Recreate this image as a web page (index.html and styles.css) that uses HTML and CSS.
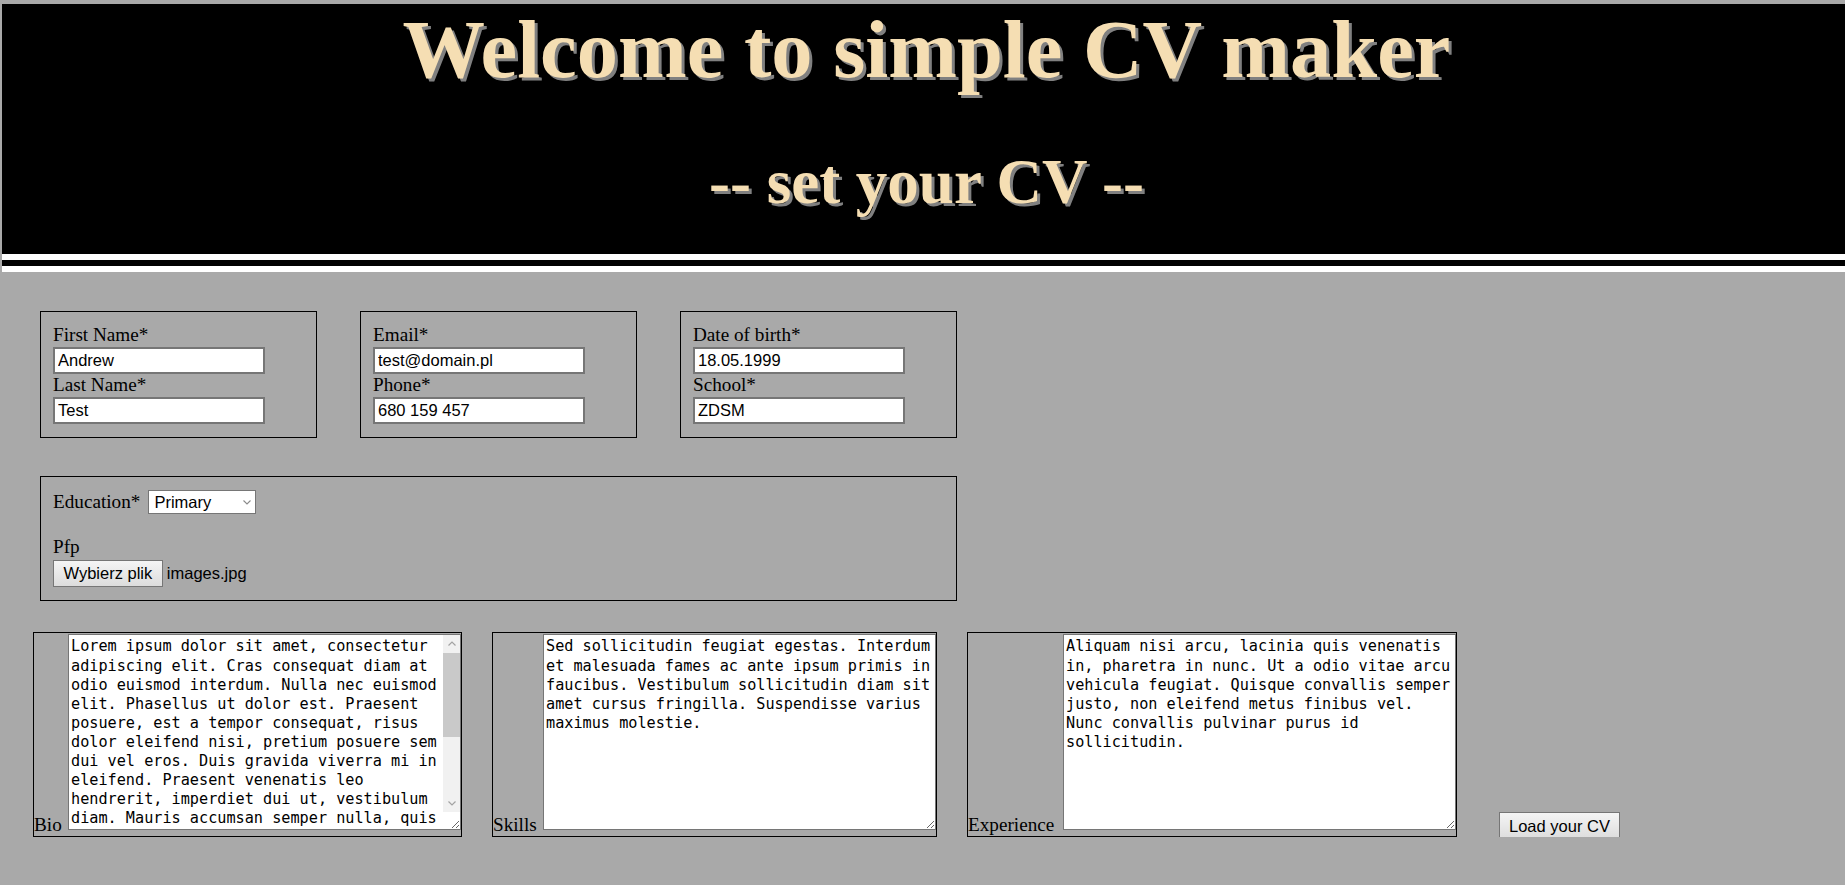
FILE: index.html
```html
<!DOCTYPE html>
<html lang="pl">
<head>
<meta charset="utf-8">
<title>Simple CV maker</title>
<link rel="stylesheet" href="styles.css">
</head>
<body>
<header class="banner">
  <h1 class="banner-title">Welcome to simple CV maker</h1>
  <h2 class="banner-sub">-- set your CV --</h2>
</header>
<form class="cv-form">
  <div class="row-info">
    <div class="box">
      <label class="lbl" for="fname">First Name*</label>
      <input class="field" id="fname" type="text" value="Andrew">
      <label class="lbl" for="lname">Last Name*</label>
      <input class="field" id="lname" type="text" value="Test">
    </div>
    <div class="box">
      <label class="lbl" for="email">Email*</label>
      <input class="field" id="email" type="text" value="test@domain.pl">
      <label class="lbl" for="phone">Phone*</label>
      <input class="field" id="phone" type="text" value="680 159 457">
    </div>
    <div class="box">
      <label class="lbl" for="dob">Date of birth*</label>
      <input class="field" id="dob" type="text" value="18.05.1999">
      <label class="lbl" for="school">School*</label>
      <input class="field" id="school" type="text" value="ZDSM">
    </div>
  </div>
  <div class="box box-wide">
    <div class="edu-row">
      <label class="lbl" for="edu">Education*</label>
      <span class="select-wrap">
        <select class="select" id="edu">
          <option>Primary</option>
          <option>Secondary</option>
          <option>Higher</option>
        </select>
        <svg class="chev" width="8" height="5" viewBox="0 0 8 5"><polyline points="0.5,0.5 4,4 7.5,0.5" fill="none" stroke="#8a8a8a" stroke-width="1.1"/></svg>
      </span>
    </div>
    <label class="lbl lbl-pfp">Pfp</label>
    <div class="file-row">
      <span class="file-btn">Wybierz plik</span>
      <span class="file-name">images.jpg</span>
    </div>
  </div>
  <div class="row-text">
    <div class="tbox tbox-bio">
      <label class="lbl tlbl" for="bio">Bio</label>
      <div class="bio-wrap">
        <textarea class="area area-bio" id="bio">Lorem ipsum dolor sit amet, consectetur adipiscing elit. Cras consequat diam at odio euismod interdum. Nulla nec euismod elit. Phasellus ut dolor est. Praesent posuere, est a tempor consequat, risus dolor eleifend nisi, pretium posuere sem dui vel eros. Duis gravida viverra mi in eleifend. Praesent venenatis leo hendrerit, imperdiet dui ut, vestibulum diam. Mauris accumsan semper nulla, quis tincidunt lectus mollis a. Nam vel nisi non nunc facilisis tempus. Suspendisse potenti. Vivamus eget sapien vel leo rhoncus porta. Morbi at feugiat lorem, sed luctus augue. Etiam non ex vitae justo hendrerit pulvinar. Integer vel ultricies lacus, ut aliquet nibh.</textarea>
        <div class="fake-sb" aria-hidden="true">
          <span class="sb-btn"><svg width="8" height="5" viewBox="0 0 8 5"><polyline points="0.5,4.5 4,1 7.5,4.5" fill="none" stroke="#a3a3a3" stroke-width="1.2"/></svg></span>
          <span class="sb-track"><span class="sb-thumb"></span></span>
          <span class="sb-btn"><svg width="8" height="5" viewBox="0 0 8 5"><polyline points="0.5,0.5 4,4 7.5,0.5" fill="none" stroke="#a3a3a3" stroke-width="1.2"/></svg></span>
        </div>
      </div>
    </div>
    <div class="tbox tbox-skills">
      <label class="lbl tlbl" for="skills">Skills</label>
      <textarea class="area" id="skills">Sed sollicitudin feugiat egestas. Interdum et malesuada fames ac ante ipsum primis in faucibus. Vestibulum sollicitudin diam sit amet cursus fringilla. Suspendisse varius maximus molestie.</textarea>
    </div>
    <div class="tbox tbox-exp">
      <label class="lbl tlbl" for="exp">Experience</label>
      <textarea class="area" id="exp">Aliquam nisi arcu, lacinia quis venenatis in, pharetra in nunc. Ut a odio vitae arcu vehicula feugiat. Quisque convallis semper justo, non eleifend metus finibus vel. Nunc convallis pulvinar purus id sollicitudin.</textarea>
    </div>
    <button type="button" class="load-btn">Load your CV</button>
  </div>
</form>
</body>
</html>
```
FILE: styles.css
```css
* {
  box-sizing: border-box;
}

html,
body {
  margin: 0;
}

body {
  background: #a9a9a9;
  color: #000;
  font-family: "Liberation Serif", "Times New Roman", serif;
  font-size: 19.2px;
}

/* ---------- header ---------- */
.banner {
  margin: 4px 0 0 2px;
  padding: 4px 0 40.6px 6px;
  background: #000;
  border-bottom: 18px double #fff;
  text-align: center;
}

.banner-title,
.banner-sub {
  margin: 0;
  color: #f5deb3;
  font-family: "Liberation Serif", "Times New Roman", serif;
  font-weight: bold;
  line-height: 1;
  text-shadow: 3px 3px 0 #808080;
}

.banner-title {
  font-size: 82.5px;
}

.banner-sub {
  margin-top: 60.4px;
  font-size: 63px;
}

/* ---------- form ---------- */
.lbl {
  display: block;
  line-height: 22px;
}

.row-info {
  display: flex;
  gap: 43px;
  margin: 39px 0 0 40px;
}

.box {
  width: 277px;
  border: 1px solid #000;
  padding: 12px 12px 13px;
  display: flex;
  flex-direction: column;
  align-items: flex-start;
}

.field {
  display: block;
  width: 212px;
  height: 27px;
  margin: 1px 0 0;
  padding: 1px 3px;
  border: 2px solid #767676;
  background: #fff;
  color: #000;
  font-family: "Liberation Sans", Arial, sans-serif;
  font-size: 16.5px;
}

.box-wide {
  width: 917px;
  margin: 38px 0 0 40px;
  padding: 13px 12px 13px;
}

.edu-row {
  display: flex;
  align-items: center;
  height: 24px;
}

.select-wrap {
  position: relative;
  display: inline-block;
  margin-left: 8px;
}

.select {
  display: block;
  width: 108px;
  height: 24px;
  margin: 0;
  padding: 0 0 0 5px;
  border: 1px solid #767676;
  border-radius: 0;
  background: #fff;
  color: #000;
  font-family: "Liberation Sans", Arial, sans-serif;
  font-size: 16.5px;
  appearance: none;
  -webkit-appearance: none;
}

.chev {
  position: absolute;
  right: 5px;
  top: 10px;
}

.lbl-pfp {
  margin-top: 22px;
}

.file-row {
  display: flex;
  align-items: center;
  margin-top: 2px;
  font-family: "Liberation Sans", Arial, sans-serif;
  font-size: 16.5px;
}

.file-btn {
  display: inline-flex;
  align-items: center;
  height: 27px;
  padding: 0 9.5px;
  border: 1px solid #767676;
  background: linear-gradient(#f5f5f5, #dcdcdc);
}

.file-name {
  margin-left: 4px;
}

.row-text {
  display: flex;
  align-items: flex-end;
  gap: 30px;
  margin: 31px 0 0 33px;
}

.tbox {
  display: flex;
  justify-content: space-between;
  align-items: flex-end;
  border: 1px solid #000;
  padding: 1px 0 6px 0;
}

.tbox-bio {
  width: 429px;
}

.tbox-skills {
  width: 445px;
}

.tbox-exp {
  width: 490px;
}

.tlbl {
  line-height: 11px;
  white-space: nowrap;
}

.area {
  display: block;
  width: 393px;
  height: 196px;
  margin: 0;
  padding: 2px;
  border: 1px solid #767676;
  background: #fff;
  color: #000;
  font-family: "DejaVu Sans Mono", "Liberation Mono", monospace;
  font-size: 15.2px;
  line-height: 19.1px;
  resize: both;
}

/* ---------- Bio with its scrollbar ---------- */
.bio-wrap {
  position: relative;
}

.area-bio {
  padding-right: 19px;
  overflow-y: auto;
}

.fake-sb {
  position: absolute;
  top: 1px;
  right: 1px;
  width: 17px;
  height: 177px;
  display: flex;
  flex-direction: column;
  background: #f1f1f1;
}

.sb-btn {
  flex: 0 0 17px;
  display: flex;
  align-items: center;
  justify-content: center;
}

.sb-track {
  flex: 1 1 auto;
  display: flex;
  flex-direction: column;
  padding-top: 1px;
}

.sb-thumb {
  height: 84px;
  background: #c9c9c9;
}

.load-btn {
  height: 28px;
  margin: 0 0 -3px 12px;
  padding: 0 9px;
  border: 1px solid #767676;
  background: linear-gradient(#f5f5f5, #dcdcdc);
  color: #000;
  font-family: "Liberation Sans", Arial, sans-serif;
  font-size: 16.5px;
}
```
